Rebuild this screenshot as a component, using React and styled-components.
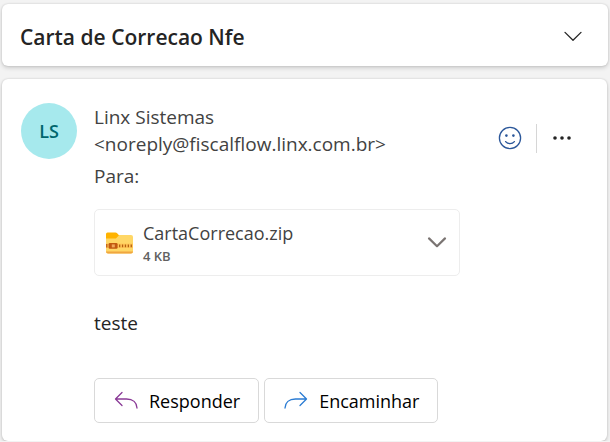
import React, { useState } from "react";
import styled, { createGlobalStyle } from "styled-components";

const GlobalStyle = createGlobalStyle`
  * {
    box-sizing: border-box;
  }

  body {
    margin: 0;
    background-color: #f3f3f3;
    color: #242424;
    font-family: "Segoe UI", "Open Sans", "Noto Sans", sans-serif;
  }

  button {
    font-family: inherit;
    cursor: pointer;
  }
`;

const Page = styled.main`
  display: flex;
  flex-direction: column;
  gap: 13px;
  padding: 4px 2px 0;
`;

const Card = styled.section`
  background-color: #fff;
  border-radius: 6px;
  box-shadow: 0 0 2px rgba(0, 0, 0, 0.16), 0 2px 4px rgba(0, 0, 0, 0.16);
`;

const SubjectCard = styled(Card)`
  display: flex;
  align-items: center;
  justify-content: space-between;
  height: 62px;
  padding: 4px 25px 0 18px;
`;

const Subject = styled.h1`
  margin: 0;
  font-size: 21px;
  line-height: 28px;
  font-weight: 600;
`;

const IconButton = styled.button`
  display: flex;
  padding: 0;
  border: none;
  background: none;
  color: ${(props) => props.$color};
`;

const MessageCard = styled(Card)`
  display: flex;
  align-items: flex-start;
  gap: 17px;
  margin-right: 1px;
  padding: 24px 34px 18px 19px;
`;

const Avatar = styled.div`
  display: flex;
  flex-shrink: 0;
  align-items: center;
  justify-content: center;
  width: 56px;
  height: 56px;
  border-radius: 50%;
  background-color: #a6e9ed;
  color: #00666d;
  font-size: 18px;
  font-weight: 600;
`;

const MessageContent = styled.div`
  flex: 1;
  min-width: 0;
  padding-top: 1px;
`;

const MessageTop = styled.header`
  display: flex;
  align-items: center;
  justify-content: space-between;
`;

const SenderInfo = styled.div`
  color: #424242;
  font-size: 19px;
  line-height: 27px;
`;

const SenderLine = styled.div``;

const Recipients = styled.div`
  margin-top: 5px;
`;

const Actions = styled.div`
  display: flex;
  align-items: center;
  gap: 14px;
  margin-top: -18px;
`;

const Divider = styled.span`
  width: 1px;
  height: 29px;
  background-color: #d6d6d6;
`;

const Attachment = styled.div`
  display: flex;
  align-items: center;
  width: 366px;
  max-width: 100%;
  height: 67px;
  margin-top: 19px;
  padding: 0 12px 0 11px;
  border: 1px solid #ededed;
  border-radius: 5px;
`;

const AttachmentInfo = styled.div`
  flex: 1;
  margin-left: 10px;
`;

const FileName = styled.div`
  color: #424242;
  font-size: 18px;
  line-height: 26px;
`;

const FileSize = styled.div`
  color: #616161;
  font-size: 13px;
  line-height: 20px;
  font-weight: 600;
`;

const MessageBody = styled.p`
  margin: 34px 0 0;
  font-size: 19px;
  line-height: 27px;
`;

const ReplyBar = styled.footer`
  display: flex;
  gap: 5px;
  margin-top: 41px;
`;

const ReplyButton = styled.button`
  display: flex;
  align-items: center;
  gap: 11px;
  height: 45px;
  padding: 0 18px 0 19px;
  border: 1px solid #d9d9d9;
  border-radius: 5px;
  background-color: #fff;
  color: #000;
  font-size: 18px;
`;

function ChevronIcon({ width = 1.3 }) {
  return (
    <svg
      width="20"
      height="20"
      viewBox="0 0 20 20"
      fill="none"
      stroke="currentColor"
      strokeWidth={width}
      strokeLinecap="round"
      strokeLinejoin="round"
    >
      <path d="M2 5.4l8 7.8 8-7.8" />
    </svg>
  );
}

function SmileIcon() {
  return (
    <svg
      width="24"
      height="24"
      viewBox="0 0 24 24"
      fill="none"
      stroke="currentColor"
      strokeWidth="1.3"
      strokeLinecap="round"
    >
      <circle cx="12" cy="12" r="10.6" />
      <path d="M7.6 15.6c2.2 2.7 6.6 2.7 8.8 0" />
      <circle cx="8.4" cy="9.6" r="1.3" fill="currentColor" stroke="none" />
      <circle cx="15.4" cy="9.6" r="1.3" fill="currentColor" stroke="none" />
    </svg>
  );
}

function MoreIcon() {
  return (
    <svg width="22" height="20" viewBox="0 0 22 20" fill="currentColor">
      <circle cx="4" cy="10" r="1.8" />
      <circle cx="11" cy="10" r="1.8" />
      <circle cx="18" cy="10" r="1.8" />
    </svg>
  );
}

function ZipFolderIcon() {
  return (
    <svg width="27" height="22" viewBox="0 0 27 22">
      <path
        d="M0 3h25a2 2 0 0 1 2 2v14.5a2 2 0 0 1-2 2H2a2 2 0 0 1-2-2z"
        fill="#ffd766"
      />
      <path
        d="M0 19.4h27a2 2 0 0 1-2 2H2a2 2 0 0 1-2-2z"
        fill="#f0a640"
      />
      <path
        d="M0 2a1.5 1.5 0 0 1 1.5-1.5h8c.6 0 1 .2 1.4.6L13 3.2 10.4 6c-.4.4-.8.6-1.4.6H0z"
        fill="#ffb300"
      />
      <path d="M0 11.6h27v4.4H0z" fill="#ffc456" />
      <path d="M0.8 12v3.6" stroke="#c25a10" strokeWidth="1.3" />
      <rect x="2.6" y="11" width="9" height="5.8" rx="1.2" fill="#c25a10" />
      <rect x="5.8" y="12.4" width="3" height="3" fill="#f0a85a" />
      <path
        d="M13 13.9H27"
        stroke="#b5600f"
        strokeWidth="2.8"
        strokeDasharray="1.3 1.6"
      />
    </svg>
  );
}

function ReplyIcon({ forward }) {
  return (
    <svg
      width="24"
      height="20"
      viewBox="0 0 24 20"
      fill="none"
      stroke={forward ? "#2b7cd3" : "#8a3a96"}
      strokeWidth="1.3"
      strokeLinecap="round"
      strokeLinejoin="round"
    >
      {forward ? (
        <path d="M16 1.5l6.5 6.5-6.5 6.5M22 8H11.5C5 8 1.2 11.6 1 17" />
      ) : (
        <path d="M8 1.5L1.5 8 8 14.5M2 8h10.5C19 8 22.8 11.6 23 17" />
      )}
    </svg>
  );
}

export function MailMessage() {
  const [collapsed, setCollapsed] = useState(false);

  return (
    <Page>
      <GlobalStyle />
      <SubjectCard>
        <Subject>Carta de Correcao Nfe</Subject>
        <IconButton
          $color="#242424"
          aria-label="Recolher"
          aria-expanded={!collapsed}
          onClick={() => setCollapsed(!collapsed)}
        >
          <ChevronIcon />
        </IconButton>
      </SubjectCard>
      {!collapsed && (
        <MessageCard>
          <Avatar>LS</Avatar>
          <MessageContent>
            <MessageTop>
              <SenderInfo>
                <SenderLine>Linx Sistemas</SenderLine>
                <SenderLine>&lt;noreply@fiscalflow.linx.com.br&gt;</SenderLine>
                <Recipients>Para:</Recipients>
              </SenderInfo>
              <Actions>
                <IconButton $color="#2b579a" aria-label="Reagir">
                  <SmileIcon />
                </IconButton>
                <Divider />
                <IconButton $color="#242424" aria-label="Mais">
                  <MoreIcon />
                </IconButton>
              </Actions>
            </MessageTop>
            <Attachment>
              <ZipFolderIcon />
              <AttachmentInfo>
                <FileName>CartaCorrecao.zip</FileName>
                <FileSize>4 KB</FileSize>
              </AttachmentInfo>
              <IconButton $color="#7a7472" aria-label="Opções do anexo">
                <ChevronIcon width={2.2} />
              </IconButton>
            </Attachment>
            <MessageBody>teste</MessageBody>
            <ReplyBar>
              <ReplyButton>
                <ReplyIcon />
                Responder
              </ReplyButton>
              <ReplyButton>
                <ReplyIcon forward />
                Encaminhar
              </ReplyButton>
            </ReplyBar>
          </MessageContent>
        </MessageCard>
      )}
    </Page>
  );
}

export default MailMessage;
